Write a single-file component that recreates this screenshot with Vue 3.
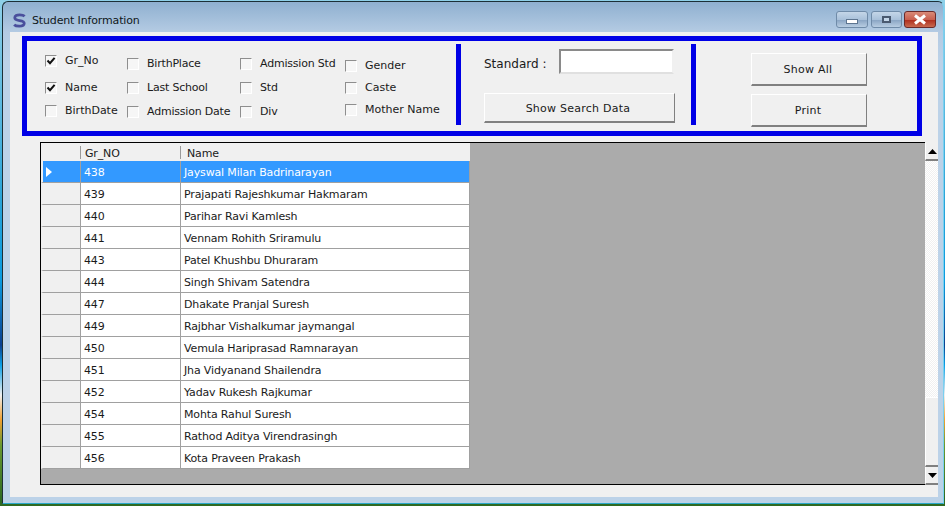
<script setup>
const columns = [
  { cls: 'c1', items: [{ t: 'Gr_No', on: true }, { t: 'Name', on: true }, { t: 'BirthDate' }] },
  { cls: 'c2', items: [{ t: 'BirthPlace' }, { t: 'Last School' }, { t: 'Admission Date' }] },
  { cls: 'c3', items: [{ t: 'Admission Std' }, { t: 'Std' }, { t: 'Div' }] },
  { cls: 'c4', items: [{ t: 'Gender' }, { t: 'Caste' }, { t: 'Mother Name' }] }
]
const rows = [
  ['438', 'Jayswal Milan Badrinarayan'],
  ['439', 'Prajapati Rajeshkumar Hakmaram'],
  ['440', 'Parihar Ravi Kamlesh'],
  ['441', 'Vennam Rohith Sriramulu'],
  ['443', 'Patel Khushbu Dhuraram'],
  ['444', 'Singh Shivam Satendra'],
  ['447', 'Dhakate Pranjal Suresh'],
  ['449', 'Rajbhar Vishalkumar jaymangal'],
  ['450', 'Vemula Hariprasad Ramnarayan'],
  ['451', 'Jha Vidyanand Shailendra'],
  ['452', 'Yadav Rukesh Rajkumar'],
  ['454', 'Mohta Rahul Suresh'],
  ['455', 'Rathod Aditya Virendrasingh'],
  ['456', 'Kota Praveen Prakash']
]
</script>

<template>
  <div class="desktop">
    <div class="window">
      <header class="titlebar">
        <svg class="logo" width="13" height="15" viewBox="0 0 14 16">
          <path d="M12.5 3.4C11.5 2.4 9.5 1.9 7.2 1.9 4 1.9 1.9 2.9 1.9 5c0 4.4 10.2 1.8 10.2 6 0 2.2-2.3 3.1-5.3 3.1-2.4 0-4.6-.6-5.6-1.6" fill="none" stroke="#4a4f9c" stroke-width="3"/>
        </svg>
        <span class="title">Student Information</span>
        <div class="caption">
          <div class="cap min"><span class="min-glyph"></span></div>
          <div class="cap max"><span class="max-glyph"></span></div>
          <div class="cap close">
            <svg width="16" height="11" viewBox="0 0 16 11">
              <path d="M3 1.5L13 9.5M13 1.5L3 9.5" stroke="#fff" stroke-width="3" fill="none"/>
            </svg>
          </div>
        </div>
      </header>
      <main class="client">
        <section class="filters">
          <div class="checks">
            <div v-for="col in columns" :key="col.cls" class="col" :class="col.cls">
              <label v-for="it in col.items" :key="it.t" class="item">
                <span class="box">
                  <svg v-if="it.on" width="10" height="10" viewBox="0 0 10 10">
                    <path d="M1.5 4.5L4 7.2 8.6 1.8" fill="none" stroke="#111" stroke-width="2"/>
                  </svg>
                </span>
                <span class="lbl">{{ it.t }}</span>
              </label>
            </div>
          </div>
          <div class="divider"></div>
          <div class="search">
            <div class="std-row">
              <span class="std-label">Standard :</span>
              <span class="std-input"></span>
            </div>
            <button class="btn search-btn">Show Search Data</button>
          </div>
          <div class="divider"></div>
          <div class="actions">
            <button class="btn act">Show All</button>
            <button class="btn act">Print</button>
          </div>
        </section>
        <section class="gridwrap">
          <div class="grid">
            <div class="table">
              <div class="row head">
                <div class="rh"></div>
                <div class="cell no"><span class="sep"></span>Gr_NO</div>
                <div class="cell name"><span class="sep"></span>Name</div>
              </div>
              <div v-for="(r, i) in rows" :key="r[0]" class="row" :class="{ sel: i === 0 }">
                <div class="rh">
                  <svg v-if="i === 0" width="6" height="10" viewBox="0 0 6 10"><path d="M0 0L6 5 0 10Z" fill="#fff"/></svg>
                </div>
                <div class="cell no">{{ r[0] }}</div>
                <div class="cell name">{{ r[1] }}</div>
              </div>
            </div>
          </div>
          <div class="scrollbar">
            <div class="sb-btn"><svg width="9" height="5" viewBox="0 0 9 5"><path d="M4.5 0L9 5H0Z" fill="#000"/></svg></div>
            <div class="track"></div>
            <div class="thumb"></div>
            <div class="sb-btn"><svg width="9" height="5" viewBox="0 0 9 5"><path d="M0 0H9L4.5 5Z" fill="#000"/></svg></div>
          </div>
        </section>
      </main>
    </div>
  </div>
</template>

<style>
html, body { margin: 0; padding: 0; overflow: hidden; }
</style>

<style scoped>
.desktop {
  width: 945px;
  height: 506px;
  box-sizing: border-box;
  padding: 1px 0 2px 2px;
  font-family: "DejaVu Sans", sans-serif;
  font-size: 11px;
  color: #1a1a1a;
  background:
    linear-gradient(to bottom, transparent 0, transparent 495px, #2f6a22 504px),
    linear-gradient(to bottom, #8fd0e8 0, #2aa4d8 200px, #0a9be0 280px, #0a3f90 345px, #0aa0e8 365px, #f0f0f0 395px, #f0a030 420px, #6a9a30 445px, #2f6a22 500px);
}
.window {
  width: 942px;
  height: 503px;
  box-sizing: border-box;
  border: 1px solid #1c3038;
  border-bottom-color: #2aa8c8;
  border-right-color: #7ad0f0;
  border-radius: 6px 6px 0 0;
  padding: 0 5px 6px 7px;
  display: flex;
  flex-direction: column;
  background: linear-gradient(to bottom, #8fb0d0 0, #b4cbe3 30px, #bcd2e8 60px, #bcd2e8 100%);
}
.titlebar {
  height: 30px;
  flex: none;
  display: flex;
  align-items: center;
  padding-right: 2px;
}
.logo { margin: 6px 0 0 3px; }
.title {
  margin: 6px 0 0 6px;
  color: #101820;
  font-size: 11px;
  letter-spacing: -.15px;
}
.caption {
  margin-left: auto;
  display: flex;
  gap: 3px;
  align-items: flex-start;
  align-self: flex-start;
  padding-top: 9px;
}
.cap {
  height: 17px;
  box-sizing: border-box;
  border: 1px solid #6f8ba8;
  border-radius: 3px;
  display: flex;
  align-items: center;
  justify-content: center;
  background: linear-gradient(to bottom, #c4d6e8 0, #a9c1da 50%, #8ba6c4 55%, #b8cde2 100%);
}
.min { width: 32px; }
.max { width: 31px; }
.close {
  width: 32px;
  margin-left: -1px;
  border-color: #6a2a2a;
  background: linear-gradient(to bottom, #d98a78 0, #c86050 50%, #b03020 55%, #c86a50 100%);
}
.min-glyph {
  width: 10px;
  height: 3px;
  background: #fff;
  border: 1px solid #5d7590;
  margin-top: 3px;
}
.max-glyph {
  width: 9px;
  height: 7px;
  box-sizing: border-box;
  border: 2px solid #4a5a70;
  background: #c4d6e8;
}
.client {
  flex: 1;
  min-height: 0;
  background: #f0f0f0;
  padding: 4px 0 0 12px;
  display: flex;
  flex-direction: column;
}
.filters {
  width: 900px;
  height: 100px;
  flex: none;
  box-sizing: border-box;
  border: 5px solid #0000e6;
  display: flex;
}
.checks {
  width: 429px;
  flex: none;
  display: flex;
  padding-left: 18px;
  box-sizing: border-box;
}
.col { display: flex; flex-direction: column; }
.item {
  display: flex;
  align-items: center;
  gap: 8px;
  height: 12px;
  white-space: nowrap;
}
.lbl { margin-top: -2px; }
.box {
  width: 12px;
  height: 12px;
  flex: none;
  box-sizing: border-box;
  background: #f6f6f6;
  border: 1px solid;
  border-color: #8e8e8e #fff #fff #8e8e8e;
  display: flex;
  align-items: center;
  justify-content: center;
}
.c1 { width: 82px; padding-top: 14px; gap: 15px 0; }
.c1 .item:last-child { margin-top: -4px; }
.c2 { width: 113px; padding-top: 17px; gap: 12px; letter-spacing: -.2px; }
.c3 { width: 105px; padding-top: 17px; gap: 12px; letter-spacing: -.2px; }
.c4 { padding-top: 19px; gap: 10px; }
.divider {
  width: 5px;
  height: 81px;
  margin-top: 3px;
  flex: none;
  background: #0000e6;
}
.search {
  width: 230px;
  flex: none;
  box-sizing: border-box;
  padding: 8px 0 0 23px;
}
.std-row { display: flex; align-items: center; height: 25px; }
.std-label { width: 75px; flex: none; font-size: 12px; padding-top: 5px; }
.std-input {
  width: 115px;
  height: 25px;
  box-sizing: border-box;
  background: #fff;
  border: 2px solid;
  border-color: #8a8a8a #f0f0f0 #e0e0e0 #8a8a8a;
}
.btn {
  display: block;
  padding: 0 2px 0 0;
  font: inherit;
  color: #1a1a1a;
  background: #f0f0f0;
  box-sizing: border-box;
  border: 1px solid;
  border-color: #fff #808080 #808080 #fff;
  border-bottom-width: 2px;
  letter-spacing: .25px;
}
.search-btn { width: 191px; height: 30px; margin-top: 19px; padding: 2px 3px 0 0; }
.actions {
  flex: 1;
  padding: 12px 0 0 55px;
  display: flex;
  flex-direction: column;
  gap: 8px;
}
.act { width: 116px; height: 33px; }
.gridwrap {
  margin: 6px 0 0 18px;
  display: flex;
  height: 343px;
}
.grid {
  width: 885px;
  flex: none;
  box-sizing: border-box;
  border: 1px solid #000;
  border-right: 0;
  background: #ababab;
  font-size: 11px;
  letter-spacing: -.15px;
}
.table { width: 429px; }
.row {
  display: flex;
  height: 22px;
  box-sizing: border-box;
  background: #fff;
}
.row .cell { border-bottom: 1px solid #a0a0a0; }
.rh {
  width: 40px;
  flex: none;
  box-sizing: border-box;
  background: #f0f0f0;
  border-left: 2px solid #f0f0f0;
  border-bottom: 1px solid #a0a0a0;
  border-right: 1px solid #a0a0a0;
  display: flex;
  align-items: center;
  padding-left: 3px;
}
.cell {
  box-sizing: border-box;
  line-height: 23px;
  padding-left: 3px;
  border-right: 1px solid #a0a0a0;
  white-space: nowrap;
  position: relative;
}
.no { width: 100px; flex: none; }
.name { flex: 1; padding-left: 3px; }
.head { height: 18px; background: #f0f0f0; }
.head .rh { border-bottom: 0; border-right: 0; }
.head .cell {
  border-bottom: 0;
  border-right: 0;
  line-height: 22px;
  padding-left: 4px;
}
.head .name { padding-left: 6px; }
.sep {
  position: absolute;
  left: -1px;
  top: 3px;
  bottom: 2px;
  width: 1px;
  background: #9a9a9a;
}
.sel, .sel .rh { background: #3399ff; color: #fff; }
.scrollbar {
  width: 13px;
  flex: none;
  display: flex;
  flex-direction: column;
  padding-top: 1px;
  box-sizing: border-box;
}
.sb-btn {
  height: 18px;
  flex: none;
  box-sizing: border-box;
  background: #f0f0f0;
  border-bottom: 2px solid #808080;
  border-left: 1px solid #fff;
  display: flex;
  align-items: center;
  justify-content: center;
}
.track {
  flex: 1;
  background: repeating-conic-gradient(#f0f0f0 0 25%, #fff 0 50%) 0 0 / 2px 2px;
}
.thumb {
  height: 70px;
  flex: none;
  box-sizing: border-box;
  background: #f0f0f0;
  border-top: 1px solid #fff;
  border-left: 1px solid #fff;
  border-bottom: 2px solid #808080;
}
</style>
